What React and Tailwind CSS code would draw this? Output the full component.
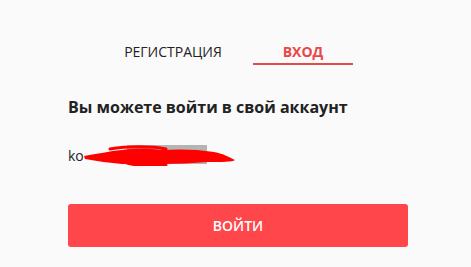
import React from "react";

export default function App() {
  return (
    <div
      className="w-[471px] h-[267px] bg-[#fafafa] overflow-hidden"
      style={{ fontFamily: '"Open Sans", "Noto Sans", sans-serif' }}
    >
      <div className="flex pt-[40px] pl-[103px]">
        <div className="w-[140px] h-[25px] flex justify-center items-start text-[14px] leading-[23px] text-[#222]">
          РЕГИСТРАЦИЯ
        </div>
        <div className="ml-[10px] w-[100px] h-[25px] flex justify-center items-start text-[14px] leading-[23px] font-bold text-[#e94848] border-b-2 border-[#e94848]">
          ВХОД
        </div>
      </div>
      <div className="pl-[68px] pt-[31px] text-[16px] leading-[22px] font-bold text-[#222]">
        Вы можете войти в свой аккаунт
      </div>
      <div className="relative ml-[68px] mt-[25px] h-[24px] w-[200px]">
        <span className="absolute left-0 top-[3px] text-[14px] leading-[20px] text-[#222]">ko</span>
        <div className="absolute left-[59px] top-[2px] w-[80px] h-[19px] bg-[#b4b4b4]" />
        <svg className="absolute left-[14px] top-[1px]" width="156" height="22" viewBox="0 0 156 22">
          <path
            d="M2 12 C 15 10, 28 7, 40 6 C 55 4, 65 4, 78 6 C 95 5, 115 5, 132 8 C 142 10, 147 13, 153 16 C 150 18, 140 18, 125 18 C 110 19, 95 20, 82 20 C 70 21, 55 20, 40 20 C 28 19, 15 17, 3 15 Z"
            fill="#ff0000"
          />
          <path d="M28 5 C 45 2, 70 2, 84 5" stroke="#ff0000" strokeWidth="3" fill="none" strokeLinecap="round" />
          <path d="M45 19 C 55 22, 70 22, 84 21" stroke="#ff0000" strokeWidth="3" fill="none" strokeLinecap="round" />
        </svg>
      </div>
      <div className="ml-[68px] mt-[37px] w-[340px] h-[43px] rounded-[3px] bg-[#ff474b] flex items-center justify-center text-white text-[14px] font-semibold">
        ВОЙТИ
      </div>
    </div>
  );
}
